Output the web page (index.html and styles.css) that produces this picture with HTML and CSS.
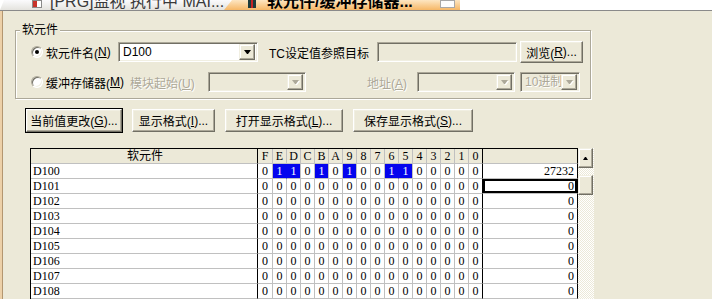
FILE: index.html
```html
<!DOCTYPE html>
<html lang="zh-CN">

<head>
    <meta charset="UTF-8">
    <link rel="stylesheet" href="styles.css">
</head>

<body>

    <div id="tabbar">
        <div class="tab tab-idle">
            <span class="icon-prg"></span>
            <span class="tab-text">[PRG]监视 执行中 MAI...</span>
        </div>
        <div class="tab tab-active">
            <span class="icon-dev"></span>
            <span class="tab-text">软元件/缓冲存储器...</span>
            <span class="tab-close"></span>
        </div>
    </div>

    <div id="main">
        <fieldset class="group">
            <legend>软元件</legend>
            <div class="form-row">
                <label class="opt opt-dev"><span class="radio checked"></span>软元件名(<u>N</u>)</label>
                <div class="combo combo-dev"><span class="combo-text">D100</span><span class="drop"></span></div>
                <span class="lbl lbl-tc">TC设定值参照目标</span>
                <div class="edit edit-tc"></div>
                <a href="#" class="button btn-browse">浏览(<u>R</u>)...</a>
            </div>
            <div class="form-row">
                <label class="opt opt-buf"><span class="radio"></span>缓冲存储器(<u>M</u>)</label>
                <span class="lbl lbl-module off">模块起始(<u>U</u>)</span>
                <div class="combo combo-module off"><span class="drop"></span></div>
                <span class="lbl lbl-addr off">地址(<u>A</u>)</span>
                <div class="combo combo-addr off"><span class="drop"></span></div>
                <div class="combo combo-radix off"><span class="combo-text">10进制</span><span class="drop"></span></div>
            </div>
        </fieldset>

        <div class="actions">
            <a href="#" class="button default btn-change">当前值更改(<u>G</u>)...</a>
            <a href="#" class="button btn-format">显示格式(<u>I</u>)...</a>
            <a href="#" class="button btn-open">打开显示格式(<u>L</u>)...</a>
            <a href="#" class="button btn-save">保存显示格式(<u>S</u>)...</a>
        </div>

        <div class="monitor">
            <div class="grid">
                <div class="grow ghead">
                    <div class="gname">软元件</div>
                    <div class="gbit">F</div><div class="gbit">E</div><div class="gbit">D</div><div class="gbit">C</div>
                    <div class="gbit">B</div><div class="gbit">A</div><div class="gbit">9</div><div class="gbit">8</div>
                    <div class="gbit">7</div><div class="gbit">6</div><div class="gbit">5</div><div class="gbit">4</div>
                    <div class="gbit">3</div><div class="gbit">2</div><div class="gbit">1</div><div class="gbit">0</div>
                    <div class="gval"></div>
                </div>
                <div class="grow">
                    <div class="gname">D100</div>
                    <div class="gbit">0</div><div class="gbit on join">1</div><div class="gbit on">1</div><div class="gbit">0</div>
                    <div class="gbit on">1</div><div class="gbit">0</div><div class="gbit on">1</div><div class="gbit">0</div>
                    <div class="gbit">0</div><div class="gbit on join">1</div><div class="gbit on">1</div><div class="gbit">0</div>
                    <div class="gbit">0</div><div class="gbit">0</div><div class="gbit">0</div><div class="gbit">0</div>
                    <div class="gval">27232</div>
                </div>
                <div class="grow">
                    <div class="gname">D101</div>
                    <div class="gbit">0</div><div class="gbit">0</div><div class="gbit">0</div><div class="gbit">0</div>
                    <div class="gbit">0</div><div class="gbit">0</div><div class="gbit">0</div><div class="gbit">0</div>
                    <div class="gbit">0</div><div class="gbit">0</div><div class="gbit">0</div><div class="gbit">0</div>
                    <div class="gbit">0</div><div class="gbit">0</div><div class="gbit">0</div><div class="gbit">0</div>
                    <div class="gval sel">0</div>
                </div>
                <div class="grow">
                    <div class="gname">D102</div>
                    <div class="gbit">0</div><div class="gbit">0</div><div class="gbit">0</div><div class="gbit">0</div>
                    <div class="gbit">0</div><div class="gbit">0</div><div class="gbit">0</div><div class="gbit">0</div>
                    <div class="gbit">0</div><div class="gbit">0</div><div class="gbit">0</div><div class="gbit">0</div>
                    <div class="gbit">0</div><div class="gbit">0</div><div class="gbit">0</div><div class="gbit">0</div>
                    <div class="gval">0</div>
                </div>
                <div class="grow">
                    <div class="gname">D103</div>
                    <div class="gbit">0</div><div class="gbit">0</div><div class="gbit">0</div><div class="gbit">0</div>
                    <div class="gbit">0</div><div class="gbit">0</div><div class="gbit">0</div><div class="gbit">0</div>
                    <div class="gbit">0</div><div class="gbit">0</div><div class="gbit">0</div><div class="gbit">0</div>
                    <div class="gbit">0</div><div class="gbit">0</div><div class="gbit">0</div><div class="gbit">0</div>
                    <div class="gval">0</div>
                </div>
                <div class="grow">
                    <div class="gname">D104</div>
                    <div class="gbit">0</div><div class="gbit">0</div><div class="gbit">0</div><div class="gbit">0</div>
                    <div class="gbit">0</div><div class="gbit">0</div><div class="gbit">0</div><div class="gbit">0</div>
                    <div class="gbit">0</div><div class="gbit">0</div><div class="gbit">0</div><div class="gbit">0</div>
                    <div class="gbit">0</div><div class="gbit">0</div><div class="gbit">0</div><div class="gbit">0</div>
                    <div class="gval">0</div>
                </div>
                <div class="grow">
                    <div class="gname">D105</div>
                    <div class="gbit">0</div><div class="gbit">0</div><div class="gbit">0</div><div class="gbit">0</div>
                    <div class="gbit">0</div><div class="gbit">0</div><div class="gbit">0</div><div class="gbit">0</div>
                    <div class="gbit">0</div><div class="gbit">0</div><div class="gbit">0</div><div class="gbit">0</div>
                    <div class="gbit">0</div><div class="gbit">0</div><div class="gbit">0</div><div class="gbit">0</div>
                    <div class="gval">0</div>
                </div>
                <div class="grow">
                    <div class="gname">D106</div>
                    <div class="gbit">0</div><div class="gbit">0</div><div class="gbit">0</div><div class="gbit">0</div>
                    <div class="gbit">0</div><div class="gbit">0</div><div class="gbit">0</div><div class="gbit">0</div>
                    <div class="gbit">0</div><div class="gbit">0</div><div class="gbit">0</div><div class="gbit">0</div>
                    <div class="gbit">0</div><div class="gbit">0</div><div class="gbit">0</div><div class="gbit">0</div>
                    <div class="gval">0</div>
                </div>
                <div class="grow">
                    <div class="gname">D107</div>
                    <div class="gbit">0</div><div class="gbit">0</div><div class="gbit">0</div><div class="gbit">0</div>
                    <div class="gbit">0</div><div class="gbit">0</div><div class="gbit">0</div><div class="gbit">0</div>
                    <div class="gbit">0</div><div class="gbit">0</div><div class="gbit">0</div><div class="gbit">0</div>
                    <div class="gbit">0</div><div class="gbit">0</div><div class="gbit">0</div><div class="gbit">0</div>
                    <div class="gval">0</div>
                </div>
                <div class="grow">
                    <div class="gname">D108</div>
                    <div class="gbit">0</div><div class="gbit">0</div><div class="gbit">0</div><div class="gbit">0</div>
                    <div class="gbit">0</div><div class="gbit">0</div><div class="gbit">0</div><div class="gbit">0</div>
                    <div class="gbit">0</div><div class="gbit">0</div><div class="gbit">0</div><div class="gbit">0</div>
                    <div class="gbit">0</div><div class="gbit">0</div><div class="gbit">0</div><div class="gbit">0</div>
                    <div class="gval">0</div>
                </div>
            </div>
            <div class="vscroll">
                <span class="sb-btn sb-up"></span>
                <span class="sb-btn sb-thumb"></span>
            </div>
        </div>
    </div>

</body>

</html>
```

FILE: styles.css
```css
body {
    margin: 0;
    width: 712px;
    height: 299px;
    overflow: hidden;
    background-color: #ece9d8;
    font-family: "Liberation Sans", "Noto Sans CJK SC", sans-serif;
    font-size: 12px;
    color: #000;
}

u {
    text-decoration: underline;
}

/* MDI tab strip, only its lower edge is visible */
#tabbar {
    display: flex;
    height: 10px;
    overflow: hidden;
    background-color: #fff;
    border-bottom: 1px solid #8a8a8a;
}

.tab {
    display: flex;
    align-items: flex-end;
    height: 10px;
    box-sizing: border-box;
    font-size: 16px;
    line-height: 16px;
    white-space: nowrap;
    overflow: hidden;
}

.tab-idle {
    width: 230px;
    padding-left: 32px;
    background: linear-gradient(#fbfbfd, #e4e3de);
    color: #3a3a3a;
    clip-path: polygon(4px 0, 100% 0, 100% 100%, 0 100%);
}

.tab-active {
    width: 236px;
    margin-left: -6px;
    padding-left: 24px;
    background: linear-gradient(#fde6c2, #f6b766);
    font-weight: bold;
    clip-path: polygon(0 100%, 8px 0, 100% 0, 100% 100%);
}

.icon-prg {
    width: 10px;
    height: 8px;
    margin-bottom: 2px;
    box-sizing: border-box;
    border: 1px solid #8a8a8a;
    background: linear-gradient(to right, #c8322a 0 4px, #fff 4px);
}

.icon-dev {
    width: 8px;
    height: 8px;
    margin-bottom: 2px;
    background: linear-gradient(to right, #1d3b3b 0 3px, #c62424 3px 5px, #1d3b3b 5px);
}

.tab-idle .tab-text {
    margin-left: 8px;
}

.tab-active .tab-text {
    margin-left: 11px;
}

.tab-close {
    width: 15px;
    height: 8px;
    margin: 0 5px 2px auto;
    box-sizing: border-box;
    background-color: #fdfdfd;
    border: 1px solid #a8a8a8;
}

/* dialog body */
#main {
    height: 288px;
    box-sizing: border-box;
    padding: 12px 0 0 13px;
    border-left: 2px solid #ecd0a8;
    box-shadow: inset 1px 0 0 #b39670;
}

.group {
    width: 576px;
    box-sizing: border-box;
    margin: 0;
    padding: 4px 0 5px 4px;
    border: 1px solid #aca899;
    box-shadow: inset 1px 1px 0 #fff, 1px 1px 0 #fff;
}

.group legend {
    padding: 0 2px;
    line-height: 14px;
    background-color: #ece9d8;
}

.form-row {
    display: flex;
    align-items: center;
    height: 22px;
    padding-left: 11px;
    white-space: nowrap;
}

.form-row + .form-row {
    margin-top: 8px;
}

.opt {
    display: flex;
    align-items: center;
}

.radio {
    display: flex;
    align-items: center;
    justify-content: center;
    width: 12px;
    height: 12px;
    margin-right: 3px;
    box-sizing: border-box;
    border-radius: 50%;
    background-color: #fff;
    border: 1px solid;
    border-color: #aca899 #fff #fff #aca899;
    box-shadow: inset 1px 1px 0 #716f64, inset -1px -1px 0 #f1efe2;
}

.radio.checked::after {
    content: '';
    width: 4px;
    height: 4px;
    border-radius: 50%;
    background-color: #000;
}

.opt-dev { width: 87px; }
.opt-buf { width: 99px; }

.lbl-tc {
    width: 108px;
    margin-left: 11px;
}

.lbl-module { width: 78px; }

.lbl-addr {
    width: 50px;
    margin-left: 61px;
}

.off {
    color: #aca899;
    text-shadow: 1px 1px 0 #fff;
}

.combo,
.edit {
    display: flex;
    align-items: center;
    height: 20px;
    box-sizing: border-box;
    padding: 2px;
    background-color: #fff;
    border: 1px solid;
    border-color: #aca899 #fff #fff #aca899;
    box-shadow: inset 1px 1px 0 #716f64, inset -1px -1px 0 #f1efe2;
}

.combo.off,
.edit {
    background-color: #ece9d8;
}

.combo-text {
    flex: 1;
    padding-left: 2px;
    overflow: hidden;
    white-space: nowrap;
    line-height: 14px;
}

.drop {
    display: flex;
    align-items: center;
    justify-content: center;
    flex: none;
    width: 16px;
    height: 16px;
    margin-left: auto;
    box-sizing: border-box;
    background-color: #ece9d8;
    border: 1px solid;
    border-color: #f1efe2 #716f64 #716f64 #f1efe2;
    box-shadow: inset -1px -1px 0 #aca899, inset 1px 1px 0 #fff;
}

.drop::after {
    content: '';
    width: 1px;
    height: 0;
    border-top: 4px solid #000;
    border-left: 3px solid transparent;
    border-right: 3px solid transparent;
}

.off .drop::after {
    border-top-color: #aca899;
    filter: drop-shadow(1px 1px 0 #fff);
}

.combo-dev { width: 140px; }
.edit-tc { width: 140px; }
.combo-module { width: 98px; }
.combo-addr { width: 98px; }

.combo-radix {
    width: 60px;
    margin-left: 5px;
}

.button {
    display: flex;
    align-items: center;
    justify-content: center;
    height: 23px;
    box-sizing: border-box;
    background-color: #ece9d8;
    border: 1px solid;
    border-color: #fff #716f64 #716f64 #fff;
    box-shadow: inset -1px -1px 0 #aca899, inset 1px 1px 0 #f1efe2;
    color: #000;
    text-decoration: none;
    white-space: nowrap;
}

.button.default {
    outline: 1px solid #000;
}

.btn-browse {
    width: 63px;
    height: 22px;
    margin-left: 3px;
}

.actions {
    display: flex;
    gap: 10px;
    margin-top: 10px;
    padding-left: 11px;
}

.btn-change { width: 96px; }
.btn-format { width: 83px; }
.btn-open { width: 118px; }
.btn-save { width: 120px; }

/* device monitor grid */
.monitor {
    display: flex;
    margin: 16px 0 0 15px;
}

.grid {
    border-left: 1px solid #000;
    border-top: 1px solid #000;
    background-color: #fff;
    font-family: "Liberation Serif", "Noto Sans CJK SC", serif;
    font-size: 12px;
}

.grow {
    display: flex;
    height: 15px;
    line-height: 14px;
}

.grow > div {
    box-sizing: border-box;
    border-bottom: 1px solid #c0c0c0;
    border-right: 1px solid #c0c0c0;
}

.ghead {
    background-color: #ece9d8;
}

.grow .gname {
    width: 227px;
    padding-left: 2px;
    border-right-color: #000;
}

.ghead .gname {
    text-align: center;
}

.gbit {
    width: 14px;
    text-align: center;
}

.grow .gbit:nth-child(2) {
    width: 15px;
}

.grow .gbit:nth-child(17) {
    border-right-color: #000;
}

.grow .gval {
    width: 95px;
    padding-right: 3px;
    text-align: right;
    border-right-color: #000;
}

.gbit.on {
    background-color: #0404ee;
    color: #fff;
}

.grow .gbit.join {
    border-right-color: #0404ee;
}

.gval.sel {
    box-shadow: inset 0 0 0 2px #000;
}

.vscroll {
    display: flex;
    flex-direction: column;
    width: 16px;
    background: repeating-conic-gradient(#fff 0 25%, #ece9d8 0 50%) 0 0 / 2px 2px;
}

.sb-btn {
    display: flex;
    align-items: center;
    justify-content: center;
    width: 15px;
    height: 20px;
    box-sizing: border-box;
    background-color: #ece9d8;
    border: 1px solid;
    border-color: #f1efe2 #716f64 #716f64 #f1efe2;
    box-shadow: inset -1px -1px 0 #aca899, inset 1px 1px 0 #fff;
}

.sb-up::after {
    content: '';
    width: 1px;
    height: 0;
    border-bottom: 3px solid #000;
    border-left: 2px solid transparent;
    border-right: 2px solid transparent;
}

.sb-thumb {
    margin-top: 7px;
}
```
